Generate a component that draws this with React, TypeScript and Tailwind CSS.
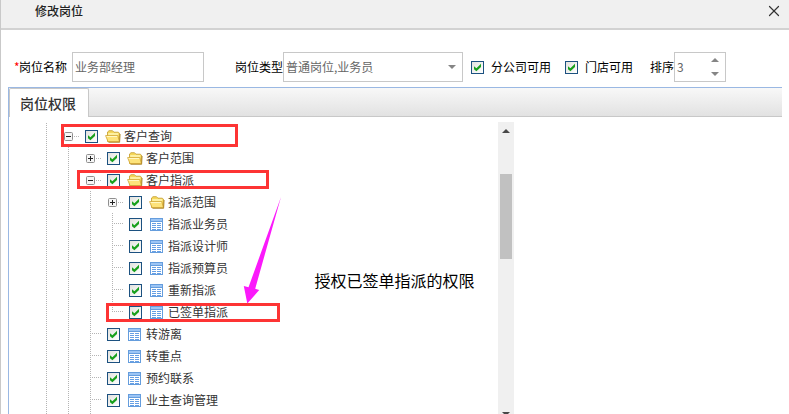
import { X } from "lucide-react";

type Node = {
  label: string;
  depth: number;
  kind: "open" | "closed" | "leaf";
  last?: boolean;
};

const nodes: Node[] = [
  { label: "客户查询", depth: 0, kind: "open" },
  { label: "客户范围", depth: 1, kind: "closed" },
  { label: "客户指派", depth: 1, kind: "open" },
  { label: "指派范围", depth: 2, kind: "closed" },
  { label: "指派业务员", depth: 2, kind: "leaf" },
  { label: "指派设计师", depth: 2, kind: "leaf" },
  { label: "指派预算员", depth: 2, kind: "leaf" },
  { label: "重新指派", depth: 2, kind: "leaf" },
  { label: "已签单指派", depth: 2, kind: "leaf", last: true },
  { label: "转游离", depth: 1, kind: "leaf" },
  { label: "转重点", depth: 1, kind: "leaf" },
  { label: "预约联系", depth: 1, kind: "leaf" },
  { label: "业主查询管理", depth: 1, kind: "leaf" },
];

function Checkbox() {
  return (
    <span className="block size-[13px] shrink-0 border border-[#1c5180] bg-linear-to-br from-[#e2e2de] to-white">
      <svg viewBox="0 0 11 11" className="block size-[11px]">
        <path d="M2 4.2L4.4 6.3L9 1.8V4.9L4.4 9.3L2 7.2z" fill="#18a01c" />
      </svg>
    </span>
  );
}

function Expander({ open }: { open: boolean }) {
  return (
    <span className="flex h-[22px] w-[22px] shrink-0 items-center pl-[7px]">
      <svg viewBox="0 0 9 9" className="size-[9px] shrink-0">
        <rect x=".5" y=".5" width="8" height="8" rx="1" fill="#f6f6f6" stroke="#8f8f8f" />
        <path d={open ? "M2 4.5h5" : "M2 4.5h5M4.5 2v5"} stroke="#222" />
      </svg>
      <span className="ml-px w-[5px] border-t border-dotted border-[#b8b8b8]" />
    </span>
  );
}

function Guide() {
  return (
    <span className="h-[22px] w-[22px] shrink-0 pl-[11px]">
      <span className="block h-full w-px bg-[repeating-linear-gradient(#b4b4b4_0_1px,transparent_1px_2px)]" />
    </span>
  );
}

function Branch({ last }: { last?: boolean }) {
  return (
    <span className="flex h-[22px] w-[22px] shrink-0 items-start pl-[11px]">
      <span
        className={
          last
            ? "h-[11px] w-px bg-[repeating-linear-gradient(#b4b4b4_0_1px,transparent_1px_2px)]"
            : "h-[22px] w-px bg-[repeating-linear-gradient(#b4b4b4_0_1px,transparent_1px_2px)]"
        }
      />
      <span className="mt-[10px] ml-px h-px w-[9px] bg-[repeating-linear-gradient(90deg,#b4b4b4_0_1px,transparent_1px_2px)]" />
    </span>
  );
}

function Folder() {
  return (
    <svg viewBox="0 0 16 13" className="h-[13px] w-[16px]">
      <path d="M2.5 11.5V2L4 .7h3.5L9 2.2h4.2l1.3 1v8.3z" fill="#f5d75a" stroke="#c39a2c" strokeWidth=".8" />
      <path d="M3.2 3h10v2.5h-10z" fill="#fdf0a0" />
      <path d="M.6 5.6h12.2l1.6 6H3z" fill="#fde37a" stroke="#cfa334" strokeWidth=".8" />
      <path d="M1.6 6.5h10.6" stroke="#fff8c4" />
      <path d="M3.5 12.4H14.6L15.2 4" fill="none" stroke="#ad8528" strokeWidth=".8" />
    </svg>
  );
}

function Sheet() {
  return (
    <svg viewBox="0 0 13 13" className="ml-px size-[13px]" shapeRendering="crispEdges">
      <rect width="13" height="13" fill="#659ddd" />
      <path d="M1 1h11v2H1z" fill="#9cc5f5" />
      <path d="M1 4h11v8H1z" fill="#fff" />
      <path d="M2 5.5h4M7 5.5h4M2 7.5h4M7 7.5h4M2 9.5h4M7 9.5h4M2 11.5h4M7 11.5h4" stroke="#669fe4" />
    </svg>
  );
}

function Row({ node }: { node: Node }) {
  return (
    <li className="flex h-[22px] items-center">
      {Array.from({ length: node.depth + 1 }, (_, i) => (
        <Guide key={i} />
      ))}
      {node.kind === "leaf" ? <Branch last={node.last} /> : <Expander open={node.kind === "open"} />}
      <span className="ml-[6px]">
        <Checkbox />
      </span>
      <span className="ml-[7px] w-[19px]">{node.kind === "leaf" ? <Sheet /> : <Folder />}</span>
      <span className="-mt-px leading-[22px] whitespace-nowrap text-[#333]">{node.label}</span>
    </li>
  );
}

function Caret({ up = false, className }: { up?: boolean; className: string }) {
  return (
    <svg viewBox="0 0 8 4" className={className}>
      <path d={up ? "M0 4L4 0L8 4z" : "M0 0L4 4L8 0z"} fill="currentColor" />
    </svg>
  );
}

export default function App() {
  return (
    <div className="relative flex h-[414px] w-[789px] flex-col overflow-hidden border-l border-[#c9c9c9] bg-white font-['Noto_Sans_CJK_SC',sans-serif] text-[12px] text-black">
      <header className="flex h-[30px] shrink-0 justify-between border-b-2 border-[#d2d2d2] bg-[#f0f0f0] pr-[6px] pl-[34px]">
        <h1 className="text-[12px] leading-[22px] font-medium text-[#222]">修改岗位</h1>
        <X className="mt-[2px] size-[18px] text-[#333]" strokeWidth={1.6} />
      </header>

      <form className="mt-[22px] flex h-[30px] shrink-0 items-center pl-[13px] whitespace-nowrap">
        <span className="w-[5px] text-[#f00]">*</span>
        <label className="w-[53px]">岗位名称</label>
        <div className="flex h-[30px] w-[132px] items-center border border-[#c8c8c8] pl-[2px] text-[#666]">业务部经理</div>
        <label className="ml-[31px] w-[48px]">岗位类型</label>
        <div className="flex h-[30px] w-[180px] items-center justify-between border border-[#c8c8c8] pr-[6px] pl-[2px] text-[#666]">
          普通岗位,业务员
          <Caret className="h-[4px] w-[8px] text-[#858585]" />
        </div>
        <span className="ml-[8px]">
          <Checkbox />
        </span>
        <label className="ml-[7px] w-[60px]">分公司可用</label>
        <span className="ml-[14px]">
          <Checkbox />
        </span>
        <label className="ml-[7px] w-[48px]">门店可用</label>
        <label className="ml-[17px] w-[24px]">排序</label>
        <div className="flex h-[30px] w-[52px] items-center justify-between border border-[#c8c8c8] pr-[6px] pl-[2px] text-[#666]">
          3
          <span className="flex flex-col gap-[10px] text-[#858585]">
            <Caret up className="h-[4px] w-[8px]" />
            <Caret className="h-[4px] w-[8px]" />
          </span>
        </div>
      </form>

      <main className="mt-[5px] ml-[7px] flex min-h-0 w-[774px] flex-1 flex-col border-t border-l border-[#9ab8e3]">
        <div className="flex h-[29px] shrink-0 border-b border-[#c8c8c8] bg-linear-to-b from-[#f8f8f8] to-[#e2e2e2]">
          <div className="h-[29px] w-[80px] rounded-t-[2px] border-t border-r border-l border-[#c8c8c8] bg-white pl-[10px] text-[14px] leading-[29px] font-medium text-[#333]">
            岗位权限
          </div>
        </div>
        <div className="mt-[5px] flex min-h-0 w-[505px] flex-1 justify-between overflow-hidden">
          <ul className="pl-[26px]">
            <li className="h-[3px] pl-[11px]">
              <span className="block h-full w-px bg-[repeating-linear-gradient(transparent_0_1px,#b4b4b4_1px_2px)]" />
            </li>
            {nodes.map((n) => (
              <Row key={n.label} node={n} />
            ))}
            <li className="flex">
              <Guide />
              <Guide />
              <Guide />
            </li>
          </ul>
          <div className="flex h-[298px] w-[16px] shrink-0 flex-col items-center bg-[#f0f0f0] text-[#484848]">
            <Caret up className="mt-[7px] h-[4px] w-[8px] shrink-0" />
            <span className="mt-[41px] h-[85px] w-[12px] shrink-0 bg-[#c1c1c1]" />
            <Caret className="mt-auto mb-[4px] h-[4px] w-[8px] shrink-0" />
          </div>
        </div>
      </main>

      <div className="absolute top-[124px] left-[60px] h-[23px] w-[177px] border-3 border-[#fd3434]" />
      <div className="absolute top-[170px] left-[76px] h-[19px] w-[192px] border-3 border-[#fd3434]" />
      <div className="absolute top-[303px] left-[105px] h-[19px] w-[174px] border-3 border-[#fd3434]" />
      <svg viewBox="0 0 40 108" className="absolute top-[196px] left-[242px] h-[108px] w-[40px]">
        <path d="M38 1L12.2 92.7L16.2 94L4.3 107.5L.8 90L5.5 91.3z" fill="#fb19fb" />
      </svg>
      <p className="absolute top-[268px] left-[313.5px] text-[16px] leading-[24px] whitespace-nowrap">授权已签单指派的权限</p>
    </div>
  );
}
